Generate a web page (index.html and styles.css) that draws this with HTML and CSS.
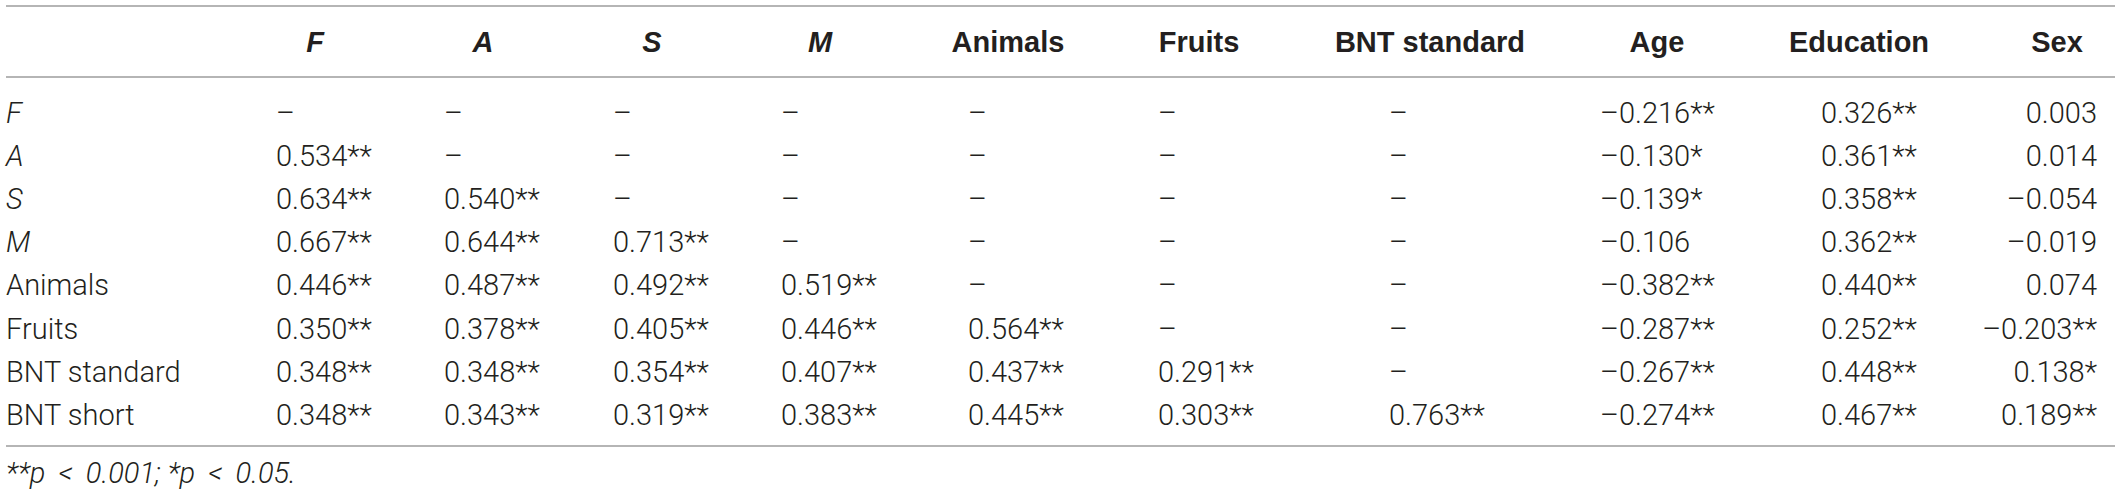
FILE: index.html
```html
<!DOCTYPE html>
<html lang="en">
<head>
<meta charset="utf-8">
<title>Correlation table</title>
<link rel="stylesheet" href="styles.css">
</head>
<body>
<div class="page">
  <table class="corr">
    <colgroup>
      <col class="w-label"><col class="w-f"><col class="w-a"><col class="w-s"><col class="w-m">
      <col class="w-animals"><col class="w-fruits"><col class="w-bnt"><col class="w-age"><col class="w-edu"><col class="w-sex">
    </colgroup>
    <thead>
      <tr>
        <th></th>
        <th><i>F</i></th>
        <th><i>A</i></th>
        <th><i>S</i></th>
        <th><i>M</i></th>
        <th>Animals</th>
        <th>Fruits</th>
        <th>BNT standard</th>
        <th>Age</th>
        <th>Education</th>
        <th>Sex</th>
      </tr>
    </thead>
    <tbody>
      <tr><td><i>F</i></td><td>–</td><td>–</td><td>–</td><td>–</td><td>–</td><td>–</td><td>–</td><td>–0.216**</td><td>0.326**</td><td>0.003</td></tr>
      <tr><td><i>A</i></td><td>0.534**</td><td>–</td><td>–</td><td>–</td><td>–</td><td>–</td><td>–</td><td>–0.130*</td><td>0.361**</td><td>0.014</td></tr>
      <tr><td><i>S</i></td><td>0.634**</td><td>0.540**</td><td>–</td><td>–</td><td>–</td><td>–</td><td>–</td><td>–0.139*</td><td>0.358**</td><td>–0.054</td></tr>
      <tr><td><i>M</i></td><td>0.667**</td><td>0.644**</td><td>0.713**</td><td>–</td><td>–</td><td>–</td><td>–</td><td>–0.106</td><td>0.362**</td><td>–0.019</td></tr>
      <tr><td>Animals</td><td>0.446**</td><td>0.487**</td><td>0.492**</td><td>0.519**</td><td>–</td><td>–</td><td>–</td><td>–0.382**</td><td>0.440**</td><td>0.074</td></tr>
      <tr><td>Fruits</td><td>0.350**</td><td>0.378**</td><td>0.405**</td><td>0.446**</td><td>0.564**</td><td>–</td><td>–</td><td>–0.287**</td><td>0.252**</td><td>–0.203**</td></tr>
      <tr><td>BNT standard</td><td>0.348**</td><td>0.348**</td><td>0.354**</td><td>0.407**</td><td>0.437**</td><td>0.291**</td><td>–</td><td>–0.267**</td><td>0.448**</td><td>0.138*</td></tr>
      <tr><td>BNT short</td><td>0.348**</td><td>0.343**</td><td>0.319**</td><td>0.383**</td><td>0.445**</td><td>0.303**</td><td>0.763**</td><td>–0.274**</td><td>0.467**</td><td>0.189**</td></tr>
    </tbody>
  </table>
  <p class="note"><i>**p <span class="op">&lt;</span> 0.001; *p <span class="op">&lt;</span> 0.05.</i></p>
</div>
</body>
</html>
```
FILE: styles.css
```css
html, body {
  margin: 0;
  padding: 0;
  background: #ffffff;
}

.page {
  padding: 5px 8px 0 6px;
  color: #231f20;
  font-family: "Roboto", "Liberation Sans", Arial, sans-serif;
  font-weight: 300;
}

.corr {
  width: 2109px;
  table-layout: fixed;
  border-collapse: separate;
  border-spacing: 0;
  font-size: 29px;
}

.w-label { width: 225px; }
.w-f { width: 168px; }
.w-a { width: 168px; }
.w-s { width: 170px; }
.w-m { width: 166px; }
.w-animals { width: 210px; }
.w-fruits { width: 172px; }
.w-bnt { width: 290px; }
.w-age { width: 164px; }
.w-edu { width: 240px; }
.w-sex { width: 136px; }

.corr th {
  font-family: "Liberation Sans", Arial, sans-serif;
  font-weight: 700;
  font-size: 29px;
  line-height: 43px;
  text-align: center;
  white-space: nowrap;
  padding: 13.5px 0 12.5px 0;
  border-top: 2px solid #b5b5b5;
  border-bottom: 2px solid #b5b5b5;
}

.corr th:last-child {
  padding-left: 20px;
}

.corr td {
  line-height: 43.2px;
  padding: 0;
  text-align: left;
  white-space: nowrap;
  vertical-align: baseline;
}

.corr tbody tr:first-child td {
  padding-top: 13.5px;
}

.corr tbody tr:last-child td {
  padding-bottom: 8px;
  border-bottom: 2px solid #b5b5b5;
}

.corr td:nth-child(1) { padding-left: 0; }
.corr td:nth-child(2) { padding-left: 45px; }
.corr td:nth-child(3) { padding-left: 45px; }
.corr td:nth-child(4) { padding-left: 46px; }
.corr td:nth-child(5) { padding-left: 44px; }
.corr td:nth-child(6) { padding-left: 65px; }
.corr td:nth-child(7) { padding-left: 45px; }
.corr td:nth-child(8) { padding-left: 104px; }
.corr td:nth-child(9) { padding-left: 25px; }
.corr td:nth-child(10) { padding-left: 82px; }
.corr td:nth-child(11) {
  text-align: right;
  padding-right: 18px;
}

.note {
  margin: 0;
  padding-top: 10px;
  font-size: 29px;
  line-height: 32px;
}

.note .op {
  margin: 0 6px;
}
```
